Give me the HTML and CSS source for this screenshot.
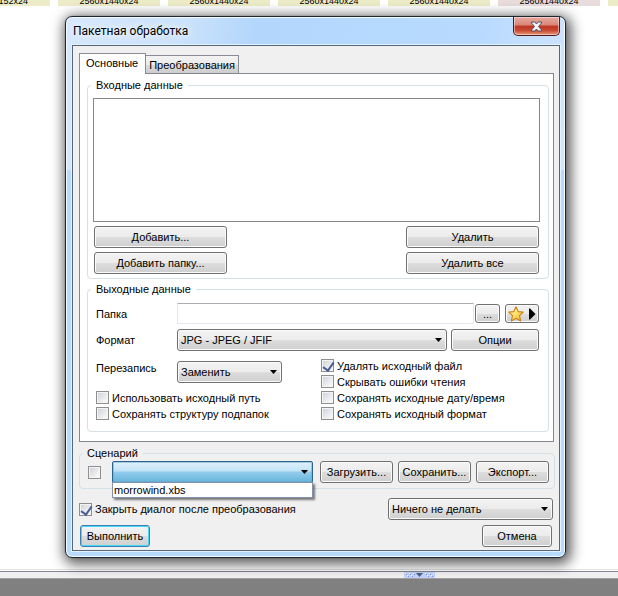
FILE: index.html
```html
<!DOCTYPE html>
<html lang="ru">
<head>
<meta charset="utf-8">
<title>Пакетная обработка</title>
<link rel="stylesheet" href="styles.css">
</head>
<body>
<div class="browser">
  <div class="thumbs">
    <span class="thumb">8192x8152x24</span>
    <span class="thumb">2560x1440x24</span>
    <span class="thumb">2560x1440x24</span>
    <span class="thumb">2560x1440x24</span>
    <span class="thumb">2560x1440x24</span>
    <span class="thumb thumb-marked">2560x1440x24</span>
    <span class="thumb"></span>
  </div>
  <div class="splitter">
    <svg class="grip" width="31" height="6" viewBox="0 0 31 6" aria-hidden="true">
      <rect width="31" height="6" fill="#c3d3fd"/>
      <g fill="#fff"><path d="M1 1h1v1h-1zM5 1h1v1h-1zM9 1h1v1h-1zM3 3h1v1h-1zM7 3h1v1h-1zM21 1h1v1h-1zM25 1h1v1h-1zM29 1h1v1h-1zM23 3h1v1h-1zM27 3h1v1h-1z"/></g>
      <g fill="#8296cc"><path d="M2 2h1v1h-1zM6 2h1v1h-1zM10 2h1v1h-1zM4 4h1v1h-1zM8 4h1v1h-1zM22 2h1v1h-1zM26 2h1v1h-1zM24 4h1v1h-1zM28 4h1v1h-1z"/></g>
      <path d="M12 1h7l-3.500 4z" fill="#4d6185"/>
    </svg>
  </div>
  <div class="preview"></div>
</div>

<div class="overlay">
<section class="window" role="dialog" aria-labelledby="caption">
  <header class="titlebar">
    <h1 id="caption">Пакетная обработка</h1>
    <button class="close" type="button" aria-label="Закрыть">
      <svg width="13" height="11" viewBox="0 0 13 11" aria-hidden="true">
        <path d="M1.500 1H4.800L6.500 3L8.200 1H11.500V2L8.500 5.500L11.500 9V10H8.200L6.500 8L4.800 10H1.500V9L4.500 5.500L1.500 2Z" fill="#f4f4f4" stroke="#4c5568" stroke-width="1"/>
      </svg>
    </button>
  </header>
  <form class="client">
    <div class="tabs" role="tablist">
      <button class="tab tab-active" type="button" role="tab" aria-selected="true">Основные</button>
      <button class="tab" type="button" role="tab" aria-selected="false">Преобразования</button>
    </div>
    <div class="panel" role="tabpanel">
      <fieldset class="group input-group">
        <legend>Входные данные</legend>
        <div class="listbox" role="listbox" aria-label="Входные данные"></div>
        <div class="list-actions">
          <button class="btn" type="button">Добавить...</button>
          <button class="btn" type="button">Удалить</button>
          <button class="btn" type="button">Добавить папку...</button>
          <button class="btn" type="button">Удалить все</button>
        </div>
      </fieldset>
      <fieldset class="group output-group">
        <legend>Выходные данные</legend>
        <div class="row">
          <label class="name" for="folder">Папка</label>
          <input class="text" id="folder" type="text">
          <button class="btn browse" type="button">...</button>
          <button class="btn favorite" type="button" aria-label="Избранное">
            <svg width="28" height="16" viewBox="0 0 28 16" aria-hidden="true">
              <defs><linearGradient id="gold" x1="0" y1="0" x2="1" y2="1"><stop offset="0" stop-color="#fffbd0"/><stop offset=".5" stop-color="#ffe066"/><stop offset="1" stop-color="#f5a623"/></linearGradient></defs>
              <path d="M8 .8L10.200 5.600L15.300 6.100L11.500 9.700L12.700 15L8 12.300L3.300 15L4.500 9.700L.7 6.100L5.800 5.600Z" fill="url(#gold)" stroke="#c98218" stroke-width="1.100" stroke-linejoin="round"/>
              <path d="M21 2.500H22L27.500 8L22 13.500H21Z" fill="#000"/>
            </svg>
          </button>
        </div>
        <div class="row format-row">
          <label class="name" for="format">Формат</label>
          <span class="combo grow">
            <select id="format"><option>JPG - JPEG / JFIF</option></select>
            <svg class="arrow" width="7" height="4" viewBox="0 0 7 4" aria-hidden="true"><path d="M0 0h7l-3.500 4z"/></svg>
          </span>
          <button class="btn options" type="button">Опции</button>
        </div>
        <div class="settings">
          <div class="settings-left">
            <div class="row row-top">
              <label class="name" for="overwrite">Перезапись</label>
              <span class="combo overwrite">
                <select id="overwrite"><option>Заменить</option></select>
                <svg class="arrow" width="7" height="4" viewBox="0 0 7 4" aria-hidden="true"><path d="M0 0h7l-3.500 4z"/></svg>
              </span>
            </div>
            <div class="checks">
              <label class="check"><input type="checkbox">Использовать исходный путь</label>
              <label class="check"><input type="checkbox">Сохранять структуру подпапок</label>
            </div>
          </div>
          <div class="checks">
            <label class="check"><input type="checkbox" checked>Удалять исходный файл</label>
            <label class="check"><input type="checkbox">Скрывать ошибки чтения</label>
            <label class="check"><input type="checkbox">Сохранять исходные дату/время</label>
            <label class="check"><input type="checkbox">Сохранять исходный формат</label>
          </div>
        </div>
      </fieldset>
    </div>
    <fieldset class="group script-group">
      <legend>Сценарий</legend>
      <div class="script-row">
        <label class="check"><input type="checkbox" aria-label="Использовать сценарий"></label>
        <div class="combo combo-open grow">
          <select aria-label="Сценарий"><option></option></select>
          <svg class="arrow" width="7" height="4" viewBox="0 0 7 4" aria-hidden="true"><path d="M0 0h7l-3.500 4z"/></svg>
          <ul class="dropdown"><li>morrowind.xbs</li></ul>
        </div>
        <div class="script-actions">
          <button class="btn" type="button">Загрузить...</button>
          <button class="btn" type="button">Сохранить...</button>
          <button class="btn" type="button">Экспорт...</button>
        </div>
      </div>
    </fieldset>
    <div class="after">
      <label class="check"><input type="checkbox" checked>Закрыть диалог после преобразования</label>
      <span class="combo finish">
        <select aria-label="После завершения"><option>Ничего не делать</option></select>
        <svg class="arrow" width="7" height="4" viewBox="0 0 7 4" aria-hidden="true"><path d="M0 0h7l-3.500 4z"/></svg>
      </span>
    </div>
    <div class="footer">
      <button class="btn btn-default" type="submit">Выполнить</button>
      <button class="btn" type="button">Отмена</button>
    </div>
  </form>
</section>
</div>
</body>
</html>
```
FILE: styles.css
```css
* { box-sizing: border-box; }

body {
  margin: 0;
  font: 11px/14px "Liberation Sans", Arial, sans-serif;
  color: #000;
  background: #fff;
}

button, input, select { font: inherit; color: inherit; margin: 0; }

/* Thumbnail browser behind the dialog */
.browser {
  display: flex;
  flex-direction: column;
  height: 100vh;
  overflow: hidden;
}
.thumbs {
  display: flex;
  align-items: flex-end;
  flex: none;
  gap: 8px;
  height: 6px;
  margin-left: -52px;
}
.thumb {
  flex: 0 0 102px;
  height: 10px;
  text-align: center;
  font-size: 9px;
  line-height: 10px;
  background: #ececc8;
}
.thumb:first-child { text-align: right; padding-right: 22px; }
.thumb-marked { background: #e8dcdc; }
.splitter {
  flex: none;
  display: flex;
  justify-content: center;
  height: 8px;
  margin-top: auto;
  padding-left: 220px;
  background: #f0f0f0;
  border-top: 1px solid #828790;
  border-bottom: 1px solid #a0a0a0;
  box-shadow: 0 -1px #fff, 0 -2px #e3e3e3;
}
.preview { flex: none; height: 17px; background: #808080; }

/* Aero window frame */
.overlay {
  position: absolute;
  inset: 0;
  padding: 16px 52px 0 65px;
}
.window {
  padding: 0 5px 6px 6px;
  border: 1px solid #1c2733;
  border-radius: 7px;
  background: linear-gradient(#b8daff, #b8daff) 0 153px no-repeat,
    linear-gradient(100deg, #d6e8fc 0, #cbe2fb 20%, #b3d7fc 32%, #b8daff 70%, #d0e5fd 88%, #d0e5fd 100%);
  box-shadow: inset 0 0 0 1px #f4faff, 0 0 1px rgba(0, 0, 0, .6), 2px 3px 13px 3px rgba(0, 0, 0, .65);
}
.titlebar {
  display: flex;
  justify-content: space-between;
  align-items: flex-start;
  height: 28px;
}
.titlebar h1 {
  margin: 6px 0 0 1px;
  font: 12px/16px Roboto, "Segoe UI", sans-serif;
  text-shadow: 0 0 8px #fff, 0 0 8px #fff;
}
.close {
  display: flex;
  align-items: center;
  justify-content: center;
  width: 47px;
  height: 19px;
  padding: 0;
  border: 1px solid #52191a;
  border-top: 0;
  border-radius: 0 0 5px 5px;
  background: linear-gradient(#e8aaa0 0, #d98577 45%, #bd3423 50%, #c94a33 75%, #e39a78 100%);
  box-shadow: inset 0 0 0 1px rgba(255, 235, 230, .55);
}
.client {
  margin: 0;
  padding: 7px 4px 3px 6px;
  border: 1px solid #56677c;
  background: #f0f0f0;
  box-shadow: 0 0 0 1px #e4f2ff;
}

/* Tabs */
.tabs { display: flex; align-items: flex-end; height: 20px; }
.tab {
  height: 18px;
  padding: 0 3px;
  border: 1px solid #898c95;
  border-left: 0;
  border-bottom: 0;
  background: linear-gradient(#f3f3f3 0, #ebebeb 50%, #dddddd 51%, #cdcdcd 100%);
}
.tab-active {
  position: relative;
  z-index: 1;
  height: 21px;
  margin-bottom: -1px;
  padding: 0 7px 2px 6px;
  border-left: 1px solid #898c95;
  background: #fff;
}
.panel {
  margin-right: 1px;
  padding: 4px 4px 9px 7px;
  border: 1px solid #828790;
  background: #fff;
}

/* Group boxes */
.group {
  min-width: 0;
  margin: 0;
  border: 1px solid #d5dfe5;
  border-radius: 4px;
}
.group legend { padding: 0 5px; height: 14px; }
.input-group { padding: 6px 8px 4px 5px; }
.input-group legend { margin-left: -2px; }
.output-group { margin-top: 3px; padding: 7px 9px 11px 8px; }
.output-group legend { margin-left: -5px; }
.script-group { margin-top: 4px; padding: 1px 5px 5px 8px; }
.script-group legend { margin-left: -6px; }

.listbox { height: 124px; border: 1px solid #828790; background: #fff; }
.list-actions {
  display: grid;
  grid-template-columns: 133px 133px;
  justify-content: space-between;
  gap: 4px;
  padding: 4px 1px 0;
}

/* Controls */
.btn {
  height: 22px;
  padding: 0 2px;
  border: 1px solid #707070;
  border-radius: 3px;
  background: linear-gradient(#f3f3f3 0, #ebebeb 50%, #dddddd 51%, #cfcfcf 100%);
  box-shadow: inset 0 0 0 1px #fbfbfb;
  text-align: center;
  white-space: nowrap;
}
.btn-default {
  border-color: #3c7fb1;
  box-shadow: inset 0 0 0 1px #46d8fb;
}
.text {
  flex: 1;
  min-width: 0;
  height: 21px;
  padding: 0 3px;
  border: 1px solid #e2e8ee;
  border-top-color: #abadb3;
  border-radius: 1px;
  background: #fff;
}
.combo { position: relative; display: flex; height: 22px; }
.combo select {
  appearance: none;
  width: 100%;
  padding: 0 18px 0 3px;
  border: 1px solid #707070;
  border-radius: 3px;
  background: linear-gradient(#f3f3f3 0, #ebebeb 50%, #dddddd 51%, #cfcfcf 100%);
  box-shadow: inset 0 0 0 1px #fbfbfb;
}
.combo .arrow { position: absolute; right: 5px; top: 9px; pointer-events: none; }
.combo-open select {
  border-color: #2c628b;
  border-radius: 2px;
  background: linear-gradient(#e0f2fb 0, #c0e3f6 45%, #93cdec 50%, #68b3db 100%);
  box-shadow: inset 0 0 0 1px rgba(100, 165, 200, .5);
}
.dropdown {
  position: absolute;
  z-index: 2;
  top: 21px;
  left: 0;
  right: 0;
  margin: 0;
  padding: 0 1px;
  border: 1px solid #8292ac;
  background: #fff;
  list-style: none;
  box-shadow: 2px 2px 2px rgba(0, 0, 0, .5);
}
.grow { flex: 1; }

.check { display: flex; align-items: center; gap: 3px; height: 13px; white-space: nowrap; }
.check input {
  appearance: none;
  position: relative;
  flex: none;
  width: 13px;
  height: 13px;
  padding: 1px;
  border: 1px solid #8e8f8f;
  background: linear-gradient(135deg, #cbcfd5, #f6f6f6 80%);
  background-clip: content-box;
  box-shadow: inset 0 0 0 1px #f4f4f4;
}
.check input:checked::after {
  content: "";
  position: absolute;
  left: 3px;
  top: 0;
  width: 5px;
  height: 9px;
  border: solid #4b5f97;
  border-width: 0 2px 2px 0;
  transform: rotate(35deg);
}
.checks { display: grid; gap: 3px; align-content: start; }

/* Output settings */
.row { display: flex; align-items: center; }
.row-top { align-items: flex-start; }
.name { flex: 0 0 81px; }
.format-row { margin-top: 5px; }
.browse { width: 25px; height: 19px; margin-left: 1px; }
.favorite { width: 34px; height: 19px; margin-left: 5px; padding: 0 2px; }
.favorite svg { display: block; }
.options { width: 88px; margin-left: 4px; }
.overwrite { width: 105px; }
.settings { display: grid; grid-template-columns: 225px 1fr; margin-top: 8px; }
.settings-left { display: grid; gap: 8px; padding-top: 2px; }

/* Script */
.script-row { display: flex; align-items: center; }
.script-row > .check { margin-right: 11px; }
.script-actions {
  display: grid;
  grid-template-columns: repeat(3, 73px);
  gap: 5px;
  margin-left: 7px;
}

/* Bottom bar */
.after { display: flex; justify-content: space-between; align-items: center; margin-top: 9px; }
.finish { width: 165px; margin-right: 2px; }
.footer { display: flex; justify-content: space-between; margin: 5px 3px 0 1px; }
.footer .btn { width: 70px; }
```
